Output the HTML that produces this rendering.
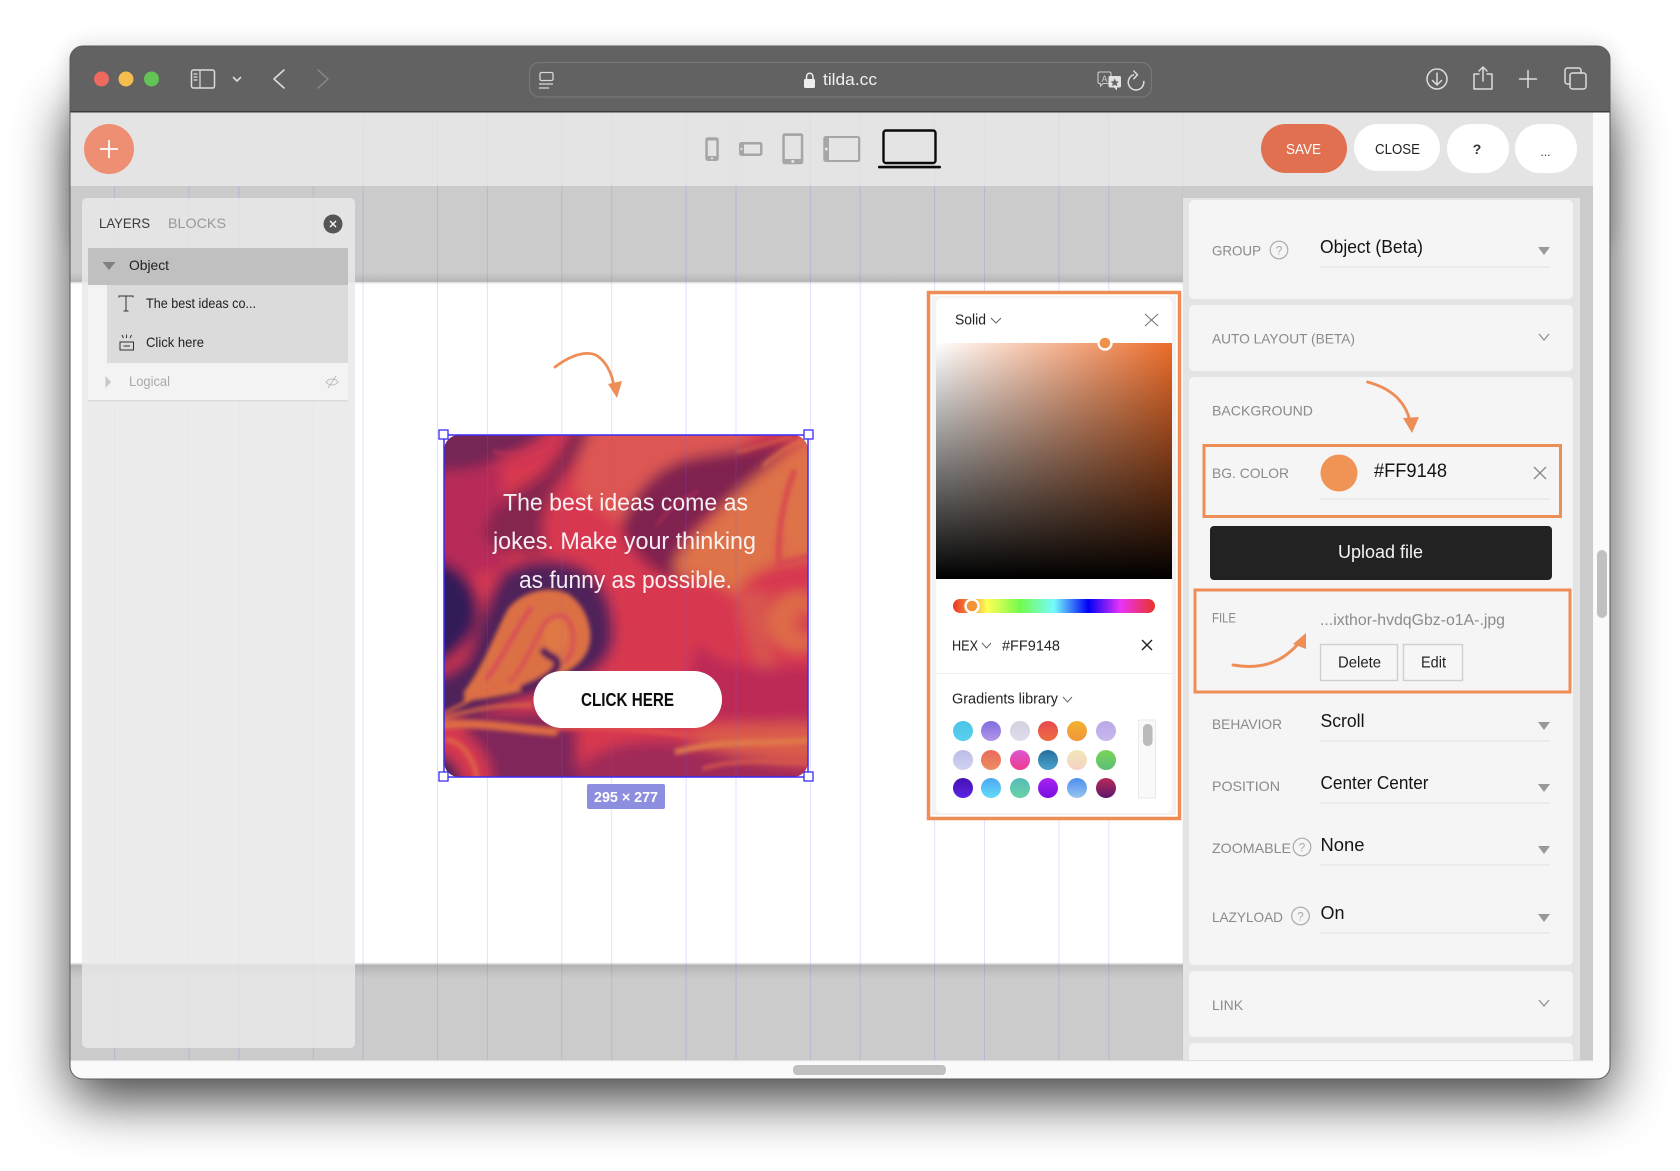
<!DOCTYPE html>
<html lang="en">
<head>
<meta charset="utf-8">
<title>Tilda</title>
<style>
html,body{margin:0;padding:0;background:#fff;width:1680px;height:1171px;overflow:hidden}
svg{display:block}
text{font-family:"Liberation Sans",sans-serif}
</style>
</head>
<body>
<svg xmlns="http://www.w3.org/2000/svg" width="1680" height="1171" viewBox="0 0 1680 1171">
<defs>
<clipPath id="win"><rect x="70" y="46" width="1540" height="1033" rx="13"/></clipPath>
<clipPath id="cardclip"><rect x="444" y="435" width="364" height="342" rx="15"/></clipPath>
<filter id="sh1" filterUnits="userSpaceOnUse" x="0" y="0" width="1680" height="1171"><feGaussianBlur stdDeviation="28"/></filter>
<filter id="sh2" filterUnits="userSpaceOnUse" x="0" y="0" width="1680" height="1171"><feGaussianBlur stdDeviation="11"/></filter>
<filter id="mb" filterUnits="userSpaceOnUse" x="-100" y="-100" width="1300" height="1240"><feGaussianBlur stdDeviation="20"/></filter>
<filter id="mb2" filterUnits="userSpaceOnUse" x="-100" y="-100" width="1300" height="1240"><feGaussianBlur stdDeviation="6"/></filter>
<linearGradient id="gTop" x1="0" y1="0" x2="0" y2="1"><stop offset="0" stop-color="#cbcbcb"/><stop offset="1" stop-color="#b4b4b4"/></linearGradient>
<linearGradient id="gBot" x1="0" y1="0" x2="0" y2="1"><stop offset="0" stop-color="#b2b2b2"/><stop offset="1" stop-color="#cbcbcb"/></linearGradient>
<linearGradient id="pickH" x1="0" y1="0" x2="1" y2="0"><stop offset="0" stop-color="#fff"/><stop offset="1" stop-color="#ec6c2a"/></linearGradient>
<linearGradient id="pickV" x1="0" y1="0" x2="0" y2="1"><stop offset="0" stop-color="#000" stop-opacity="0"/><stop offset="1" stop-color="#000"/></linearGradient>
<linearGradient id="hue" x1="0" y1="0" x2="1" y2="0">
<stop offset="0" stop-color="#ea3323"/><stop offset=".17" stop-color="#ffff55"/><stop offset=".33" stop-color="#75fb4c"/><stop offset=".5" stop-color="#75fbfd"/><stop offset=".67" stop-color="#0000f5"/><stop offset=".83" stop-color="#ea33f7"/><stop offset="1" stop-color="#ea3323"/></linearGradient>
<linearGradient id="c1" x1="0" y1="0" x2="0" y2="1"><stop offset="0" stop-color="#4cc4e6"/><stop offset="1" stop-color="#5ad0ee"/></linearGradient>
<linearGradient id="c2" x1="0" y1="0" x2="0" y2="1"><stop offset="0" stop-color="#7f6cdc"/><stop offset="1" stop-color="#b596ea"/></linearGradient>
<linearGradient id="c3" x1="0" y1="0" x2="0" y2="1"><stop offset="0" stop-color="#d3d0df"/><stop offset="1" stop-color="#dfdbec"/></linearGradient>
<linearGradient id="c4" x1="0" y1="0" x2="0" y2="1"><stop offset="0" stop-color="#e64a50"/><stop offset="1" stop-color="#ee6c42"/></linearGradient>
<linearGradient id="c5" x1="0" y1="0" x2="0" y2="1"><stop offset="0" stop-color="#f3b22e"/><stop offset="1" stop-color="#f0963c"/></linearGradient>
<linearGradient id="c6" x1="0" y1="0" x2="0" y2="1"><stop offset="0" stop-color="#b9a8e8"/><stop offset="1" stop-color="#c9b8ec"/></linearGradient>
<linearGradient id="c7" x1="0" y1="0" x2="0" y2="1"><stop offset="0" stop-color="#bcbde8"/><stop offset="1" stop-color="#d0d2ef"/></linearGradient>
<linearGradient id="c8" x1="0" y1="0" x2="0" y2="1"><stop offset="0" stop-color="#ea6a5c"/><stop offset="1" stop-color="#ec8e62"/></linearGradient>
<linearGradient id="c9" x1="0" y1="0" x2="0" y2="1"><stop offset="0" stop-color="#dc58d0"/><stop offset="1" stop-color="#ee3a8e"/></linearGradient>
<linearGradient id="c10" x1="0" y1="0" x2="0" y2="1"><stop offset="0" stop-color="#266f9f"/><stop offset="1" stop-color="#4ca4cc"/></linearGradient>
<linearGradient id="c11" x1="0" y1="0" x2="0" y2="1"><stop offset="0" stop-color="#f0e8b6"/><stop offset="1" stop-color="#f6d2c6"/></linearGradient>
<linearGradient id="c12" x1="0" y1="0" x2="0" y2="1"><stop offset="0" stop-color="#7cd455"/><stop offset="1" stop-color="#5cc078"/></linearGradient>
<linearGradient id="c13" x1="0" y1="0" x2="0" y2="1"><stop offset="0" stop-color="#4610b4"/><stop offset="1" stop-color="#5a24e4"/></linearGradient>
<linearGradient id="c14" x1="0" y1="0" x2="0" y2="1"><stop offset="0" stop-color="#4ea8f2"/><stop offset="1" stop-color="#62dcf8"/></linearGradient>
<linearGradient id="c15" x1="0" y1="0" x2="0" y2="1"><stop offset="0" stop-color="#54bcb8"/><stop offset="1" stop-color="#6cd4a6"/></linearGradient>
<linearGradient id="c16" x1="0" y1="0" x2="0" y2="1"><stop offset="0" stop-color="#a824f2"/><stop offset="1" stop-color="#7a0ee0"/></linearGradient>
<linearGradient id="c17" x1="0" y1="0" x2="0" y2="1"><stop offset="0" stop-color="#4f8ef0"/><stop offset="1" stop-color="#98c6ee"/></linearGradient>
<linearGradient id="c18" x1="0" y1="0" x2="0" y2="1"><stop offset="0" stop-color="#b82a56"/><stop offset="1" stop-color="#5c186c"/></linearGradient>
</defs>

<!-- window shadow -->
<rect x="70" y="105" width="1540" height="995" rx="16" fill="#000" opacity=".75" filter="url(#sh1)"/>
<rect x="70" y="46" width="1540" height="200" rx="13" fill="#000" opacity=".16" filter="url(#sh2)"/>

<g clip-path="url(#win)">
<rect x="70" y="46" width="1540" height="1033" fill="#fafafa"/>
<rect x="70" y="46" width="1540" height="67" fill="#626262"/>
<rect x="70" y="111" width="1540" height="1.500" fill="#3a3a3a"/>
<rect x="70" y="112.500" width="1523" height="73.500" fill="#e4e4e4"/>
<rect x="70" y="186" width="1523" height="875" fill="#cbcbcb"/>
<rect x="70" y="272" width="1113" height="11" fill="url(#gTop)"/>
<rect x="70" y="283" width="1113" height="681" fill="#fff"/>
<rect x="70" y="282" width="1113" height="1.500" fill="#e2e2e2"/>
<rect x="70" y="964" width="1113" height="14" fill="url(#gBot)"/>
<rect x="70" y="963" width="1113" height="1.500" fill="#e2e2e2"/>
</g>

<!-- marble card -->
<g clip-path="url(#cardclip)">
<g transform="translate(444 435) scale(.33333)">
<g filter="url(#mb)">
<rect x="-100" y="-100" width="1300" height="1240" fill="#d8374f"/>
<path d="M-100 80H170L190 400L100 420H-100Z" fill="#b82c58"/>
<path d="M-100 -100H340C320 40 230 40 150 80C90 110 40 100 -100 120Z" fill="#742855"/>
<path d="M420 -100H1040L880 50C720 80 600 150 540 280C500 240 420 190 390 170C400 100 410 50 420 -100Z" fill="#dd5752"/>
<path d="M390 -100C370 60 300 120 220 165C150 210 115 260 125 310C160 355 230 360 310 345C280 280 310 200 340 150C390 90 430 40 460 -100Z" fill="#85254f"/>
<path d="M-100 360C40 370 100 440 105 510C110 590 60 670 -100 730Z" fill="#321a58"/>
<path d="M80 650C110 560 140 470 170 420C240 360 350 365 420 400C490 440 515 540 510 615C495 690 440 725 380 745L200 800L50 850L-100 860L-100 740C30 720 60 690 80 650Z" fill="#50205a"/>
<path d="M530 280C560 180 630 100 730 70C820 50 950 45 1050 0C1000 80 910 140 840 205C780 255 720 320 695 370C690 395 700 420 705 435C640 430 560 360 530 280Z" fill="#80224f"/>
<path d="M690 385C720 330 780 280 830 225C890 160 960 100 1200 -60V120C1040 140 1000 300 1005 385C960 400 900 420 880 480C830 440 760 420 700 420Z" fill="#de7248"/>
<path d="M1040 130L1200 100V350L1010 385C1020 300 1020 200 1040 130Z" fill="#de7248"/>
<ellipse cx="1065" cy="560" rx="95" ry="90" fill="#de6c48"/>
<ellipse cx="1090" cy="565" rx="42" ry="38" fill="#d8454e"/>
<path d="M880 470C880 550 920 620 940 700L1000 700C960 620 970 520 980 470Z" fill="#d85550"/>
<path d="M760 620C800 680 900 720 1200 680V860C950 870 800 860 700 840Z" fill="#bd2c56"/>
<path d="M340 1140C380 950 500 910 700 920C850 960 1000 1000 1200 1000V1140Z" fill="#a02a58"/>
<path d="M720 900C820 860 960 870 1200 860V980C950 990 820 950 720 900Z" fill="#da5c4c"/>
<path d="M50 840L290 830L400 880L400 1140L150 1140C150 980 120 940 70 905Z" fill="#80265a"/>
<path d="M-100 930C30 950 60 990 70 1140H-100Z" fill="#38205a"/>
</g>
<g filter="url(#mb2)" fill="none" stroke-linecap="round">
<path d="M60 770C120 690 150 600 190 525C230 470 310 450 370 475C420 505 445 570 438 620C432 665 400 695 360 715C300 760 200 780 60 800Z" fill="#dc7045"/>
<path d="M130 730C180 660 210 590 260 520" stroke="#d8455a" stroke-width="12"/>
<path d="M200 740C240 690 260 640 290 590C300 555 340 530 370 550C395 590 395 640 365 680" stroke="#d8455a" stroke-width="10"/>
<ellipse cx="335" cy="600" rx="36" ry="48" fill="#e07845"/>
<path d="M300 650C320 670 340 665 340 690C330 720 290 740 240 760" stroke="#5a2258" stroke-width="24"/>
<path d="M0 835C70 800 130 770 210 720" stroke="#dc6a45" stroke-width="9"/>
<path d="M0 850C90 820 170 810 260 810" stroke="#dc6a45" stroke-width="10"/>
<path d="M0 870C100 860 200 880 330 890" stroke="#dd6b45" stroke-width="26"/>
<path d="M10 915C50 920 85 960 100 1030" stroke="#dd6b45" stroke-width="12"/>
<path d="M700 950C850 910 980 930 1100 915" stroke="#e07a48" stroke-width="18"/>
<path d="M780 1000C880 970 1000 980 1100 985" stroke="#d95a4c" stroke-width="11"/>
<path d="M340 880C500 870 640 890 730 900" stroke="#e0504c" stroke-width="14"/>
<path d="M150 50C230 80 300 20 370 10" stroke="#c43058" stroke-width="8"/>
<path d="M130 100C220 100 290 70 350 30" stroke="#c43058" stroke-width="6"/>
<path d="M170 220C220 170 270 150 320 110" stroke="#a82a55" stroke-width="6"/>
<path d="M640 270C680 210 720 190 760 170" stroke="#b83055" stroke-width="6"/>
<path d="M880 50C930 40 990 20 1040 5" stroke="#df6a45" stroke-width="7"/>
<path d="M960 90C1000 55 1040 30 1080 15" stroke="#e07548" stroke-width="9"/>
<path d="M1050 110C1015 200 1000 300 1005 390L1100 362" stroke="#d84a50" stroke-width="16"/>
</g>
</g>
</g>

<g clip-path="url(#win)">
<path d="M114.600 186V1061M238.900 186V1061M363.100 186V1061M487.400 186V1061M611.700 186V1061M736 186V1061M860.200 186V1061M984.500 186V1061M1108.800 186V1061M189 186V1061M313.300 186V1061M437.500 186V1061M561.800 186V1061M686.100 186V1061M810.400 186V1061M934.600 186V1061M1058.900 186V1061M1183.200 186V1061" stroke="#6a6aff" stroke-width="1" opacity=".2" fill="none"/>
<path d="M363.100 113V186M487.400 113V186M611.700 113V186M736 113V186M860.200 113V186M984.500 113V186M1108.800 113V186M437.500 113V186M561.800 113V186M686.100 113V186M810.400 113V186M934.600 113V186M1058.900 113V186M1183.200 113V186" stroke="#6a6aff" stroke-width="1" opacity=".04" fill="none"/>
</g>

<!-- card selection -->
<rect x="444" y="435" width="364" height="342" fill="none" stroke="#3b2cf5" stroke-width="1.500"/>
<g fill="#fff" stroke="#3b2cf5" stroke-width="1.300">
<rect x="439" y="430" width="9" height="9"/><rect x="804" y="430" width="9" height="9"/>
<rect x="439" y="772" width="9" height="9"/><rect x="804" y="772" width="9" height="9"/>
</g>
<g fill="#fff" font-size="24.500" opacity=".92">
<text x="503" y="510.500" textLength="245" lengthAdjust="spacingAndGlyphs">The best ideas come as</text>
<text x="493" y="549" textLength="263" lengthAdjust="spacingAndGlyphs">jokes. Make your thinking</text>
<text x="519" y="588" textLength="213" lengthAdjust="spacingAndGlyphs">as funny as possible.</text>
</g>
<rect x="533.500" y="671" width="188.500" height="57" rx="28.500" fill="#fff"/>
<text x="581" y="706" font-size="18" font-weight="700" fill="#0c0c0c" textLength="93" lengthAdjust="spacingAndGlyphs">CLICK HERE</text>
<rect x="587" y="784" width="78" height="25" rx="2" fill="#8e8ee0"/>
<text x="594" y="802" font-size="15" font-weight="700" fill="#fff" textLength="64" lengthAdjust="spacingAndGlyphs">295 × 277</text>

<!-- arrow 1 -->
<path d="M555 367C575 352 592 350 600 358C608 365 612 375 614 386" fill="none" stroke="#ef8d57" stroke-width="2.800" stroke-linecap="round"/>
<path d="M608 384L622 381L617 398Z" fill="#ef8d57"/>

<!-- left panel -->
<rect x="82" y="198" width="273" height="850" rx="5" fill="#e8e8e8" fill-opacity=".84"/>
<text x="99" y="228" font-size="14" fill="#3a3a3a" textLength="51" lengthAdjust="spacingAndGlyphs">LAYERS</text>
<text x="168" y="228" font-size="14" fill="#999" textLength="58" lengthAdjust="spacingAndGlyphs">BLOCKS</text>
<circle cx="333" cy="224" r="9.500" fill="#555"/>
<path d="M330 221L336 227M336 221L330 227" stroke="#fff" stroke-width="1.300"/>
<rect x="88" y="248" width="260" height="37" fill="#c0c0c0"/>
<rect x="88" y="285" width="260" height="78" fill="#f3f3f3"/>
<rect x="107" y="285" width="241" height="78" fill="#dbdbdb"/>
<rect x="88" y="363" width="260" height="38" fill="#f3f3f3"/>
<rect x="88" y="400" width="260" height="1.500" fill="#dcdcdc"/>
<path d="M102.500 262H115.500L109 270Z" fill="#808080"/>
<text x="129" y="270" font-size="14" fill="#222" textLength="40" lengthAdjust="spacingAndGlyphs">Object</text>
<path d="M119 297.500V296H133V297.500M126 296V311M123.500 311H128.500" fill="none" stroke="#333" stroke-width="1"/>
<text x="146" y="308" font-size="14" fill="#222" textLength="110" lengthAdjust="spacingAndGlyphs">The best ideas co...</text>
<path d="M120 342H133.500V350H120ZM123.500 346H130M122 335L123.500 338M126.500 334.500V338M131.500 335L130 338" fill="none" stroke="#333" stroke-width="1"/>
<text x="146" y="347" font-size="14" fill="#222" textLength="58" lengthAdjust="spacingAndGlyphs">Click here</text>
<path d="M105.500 376V388L111 382Z" fill="#c8c8c8"/>
<text x="129" y="386" font-size="14" fill="#aaa" textLength="41" lengthAdjust="spacingAndGlyphs">Logical</text>
<path d="M326 382C329 378 335 378 338 382C335 386 329 386 326 382ZM328 388L336 376" fill="none" stroke="#bbb" stroke-width="1"/>

<!-- right panel -->
<g clip-path="url(#win)">
<rect x="1183" y="186" width="397" height="875" fill="#cbcbcb"/>
<rect x="1183" y="198" width="397" height="863" fill="#e4e4e4"/>
<rect x="1580" y="186" width="13" height="875" fill="#cbcbcb"/>
<rect x="1189" y="200" width="384" height="99" rx="5" fill="#f5f5f5"/>
<rect x="1189" y="305" width="384" height="66" rx="5" fill="#f5f5f5"/>
<rect x="1189" y="377" width="384" height="588" rx="5" fill="#f5f5f5"/>
<rect x="1189" y="971" width="384" height="66" rx="5" fill="#f5f5f5"/>
<rect x="1189" y="1043" width="384" height="30" rx="5" fill="#f5f5f5"/>
<rect x="70" y="1061" width="1540" height="18" fill="#fafafa"/>
<rect x="70" y="1060" width="1523" height="1.200" fill="#e0e0e0"/>
<rect x="793" y="1065" width="153" height="10" rx="4" fill="#c0c0c0"/>
<rect x="1593" y="112.500" width="17" height="950" fill="#fafafa"/>
<rect x="1597" y="550" width="10" height="68" rx="5" fill="#c0c0c0"/>
</g>

<g font-size="14" fill="#8a8a8a">
<text x="1212" y="255.500" textLength="49" lengthAdjust="spacingAndGlyphs">GROUP</text>
<text x="1212" y="343.500" textLength="143" lengthAdjust="spacingAndGlyphs">AUTO LAYOUT (BETA)</text>
<text x="1212" y="415.500" textLength="101" lengthAdjust="spacingAndGlyphs">BACKGROUND</text>
<text x="1212" y="478" textLength="77" lengthAdjust="spacingAndGlyphs">BG. COLOR</text>
<text x="1212" y="622.500" textLength="24" lengthAdjust="spacingAndGlyphs">FILE</text>
<text x="1212" y="729" textLength="70" lengthAdjust="spacingAndGlyphs">BEHAVIOR</text>
<text x="1212" y="791" textLength="68" lengthAdjust="spacingAndGlyphs">POSITION</text>
<text x="1212" y="853" textLength="79" lengthAdjust="spacingAndGlyphs">ZOOMABLE</text>
<text x="1212" y="922" textLength="71" lengthAdjust="spacingAndGlyphs">LAZYLOAD</text>
<text x="1212" y="1010" textLength="31" lengthAdjust="spacingAndGlyphs">LINK</text>
</g>
<g fill="none" stroke="#aaa" stroke-width="1.200">
<circle cx="1279" cy="250" r="8.800"/><circle cx="1302" cy="847" r="8.800"/><circle cx="1300.500" cy="916" r="8.800"/>
</g>
<g font-size="12" fill="#aaa" text-anchor="middle">
<text x="1279" y="254.500">?</text><text x="1302" y="851.500">?</text><text x="1300.500" y="920.500">?</text>
</g>
<g font-size="18" fill="#141414">
<text x="1320" y="253" textLength="103" lengthAdjust="spacingAndGlyphs">Object (Beta)</text>
<text x="1320.500" y="727" textLength="44" lengthAdjust="spacingAndGlyphs">Scroll</text>
<text x="1320.500" y="789" textLength="108" lengthAdjust="spacingAndGlyphs">Center Center</text>
<text x="1320.500" y="851" textLength="44" lengthAdjust="spacingAndGlyphs">None</text>
<text x="1320.500" y="919" textLength="24" lengthAdjust="spacingAndGlyphs">On</text>
</g>
<path d="M1320 267H1550M1320 499H1550M1320 741H1550M1320 803H1550M1320 865H1550M1320 933H1550" stroke="#e5e5e5" stroke-width="1.200" fill="none"/>
<g fill="#999">
<path d="M1538 247H1550L1544 255Z"/><path d="M1538 722H1550L1544 730Z"/><path d="M1538 784H1550L1544 792Z"/><path d="M1538 846H1550L1544 854Z"/><path d="M1538 914H1550L1544 922Z"/>
</g>
<path d="M1539 334L1544 340L1549 334M1539 1000L1544 1006L1549 1000" fill="none" stroke="#888" stroke-width="1.200"/>

<circle cx="1339" cy="473" r="18.500" fill="#f09455"/>
<text x="1374" y="477" font-size="19" fill="#141414" textLength="73" lengthAdjust="spacingAndGlyphs">#FF9148</text>
<path d="M1534 467L1546 479M1546 467L1534 479" stroke="#888" stroke-width="1.300"/>
<rect x="1204" y="445.500" width="356.500" height="71" fill="none" stroke="#ef8d57" stroke-width="3"/>
<rect x="1210" y="526" width="342" height="54" rx="4" fill="#222"/>
<text x="1338" y="558" font-size="18" fill="#f4f4f4" textLength="85" lengthAdjust="spacingAndGlyphs">Upload file</text>
<rect x="1195" y="590" width="375" height="102" fill="none" stroke="#ef8d57" stroke-width="3"/>
<text x="1320" y="625" font-size="16" fill="#8c8c8c" textLength="185" lengthAdjust="spacingAndGlyphs">...ixthor-hvdqGbz-o1A-.jpg</text>
<rect x="1320.500" y="644.500" width="77" height="36" fill="#f6f6f6" stroke="#cfcfcf" stroke-width="1.400"/>
<rect x="1403.500" y="644.500" width="59" height="36" fill="#f6f6f6" stroke="#cfcfcf" stroke-width="1.400"/>
<text x="1338" y="667.500" font-size="16" fill="#222" textLength="43" lengthAdjust="spacingAndGlyphs">Delete</text>
<text x="1421" y="667.500" font-size="16" fill="#222" textLength="25" lengthAdjust="spacingAndGlyphs">Edit</text>

<!-- arrows 2, 3 -->
<path d="M1367.500 382C1390 388 1405 400 1410 421" fill="none" stroke="#ef8d57" stroke-width="2.800" stroke-linecap="round"/>
<path d="M1403 418L1419 417L1412 433Z" fill="#ef8d57"/>
<path d="M1233 665C1262 670 1282 662 1298 644" fill="none" stroke="#ef8d57" stroke-width="3" stroke-linecap="round"/>
<path d="M1293 644L1306 633L1306 649Z" fill="#ef8d57"/>

<!-- color picker -->
<rect x="928.500" y="292.500" width="251" height="526" fill="#fff" stroke="#ef8d57" stroke-width="3.500"/>
<rect x="932" y="296" width="244" height="519" fill="#f3f3f3"/>
<rect x="936" y="298" width="236" height="515" rx="6" fill="#fff"/>
<rect x="936" y="343" width="236" height="236" fill="url(#pickH)"/>
<rect x="936" y="343" width="236" height="236" fill="url(#pickV)"/>
<circle cx="1105" cy="343" r="6.500" fill="#f09148" stroke="#fff" stroke-width="2.400"/>
<text x="955" y="324.500" font-size="15" fill="#222" textLength="31" lengthAdjust="spacingAndGlyphs">Solid</text>
<path d="M991 318L996 323L1001 318" fill="none" stroke="#666" stroke-width="1"/>
<path d="M1145 314L1158 326M1158 314L1145 326" stroke="#777" stroke-width="1.100"/>
<rect x="953" y="599" width="202" height="14" rx="7" fill="url(#hue)"/>
<circle cx="972" cy="606" r="6.500" fill="#f09436" stroke="#fff" stroke-width="2.400"/>
<text x="952" y="650.500" font-size="15" fill="#222" textLength="26" lengthAdjust="spacingAndGlyphs">HEX</text>
<path d="M982 643L986.500 648L991 643" fill="none" stroke="#666" stroke-width="1"/>
<text x="1002" y="650.500" font-size="15" fill="#222" textLength="58" lengthAdjust="spacingAndGlyphs">#FF9148</text>
<path d="M1142 640L1152 650M1152 640L1142 650" stroke="#222" stroke-width="1.400"/>
<rect x="936" y="673" width="236" height="1" fill="#eee"/>
<text x="952" y="703.500" font-size="15" fill="#222" textLength="106" lengthAdjust="spacingAndGlyphs">Gradients library</text>
<path d="M1063 697L1067.500 702L1072 697" fill="none" stroke="#666" stroke-width="1"/>
<circle cx="963" cy="731" r="10" fill="url(#c1)"/><circle cx="991" cy="731" r="10" fill="url(#c2)"/><circle cx="1020" cy="731" r="10" fill="url(#c3)"/><circle cx="1048" cy="731" r="10" fill="url(#c4)"/><circle cx="1077" cy="731" r="10" fill="url(#c5)"/><circle cx="1106" cy="731" r="10" fill="url(#c6)"/>
<circle cx="963" cy="760" r="10" fill="url(#c7)"/><circle cx="991" cy="760" r="10" fill="url(#c8)"/><circle cx="1020" cy="760" r="10" fill="url(#c9)"/><circle cx="1048" cy="760" r="10" fill="url(#c10)"/><circle cx="1077" cy="760" r="10" fill="url(#c11)"/><circle cx="1106" cy="760" r="10" fill="url(#c12)"/>
<circle cx="963" cy="788" r="10" fill="url(#c13)"/><circle cx="991" cy="788" r="10" fill="url(#c14)"/><circle cx="1020" cy="788" r="10" fill="url(#c15)"/><circle cx="1048" cy="788" r="10" fill="url(#c16)"/><circle cx="1077" cy="788" r="10" fill="url(#c17)"/><circle cx="1106" cy="788" r="10" fill="url(#c18)"/>
<rect x="1138.500" y="720" width="17" height="78" fill="#f9f9f9" stroke="#eaeaea" stroke-width="1"/>
<rect x="1143" y="724" width="9.500" height="22" rx="4.500" fill="#bbb"/>

<!-- window edge -->
<rect x="70" y="46" width="1540" height="1033" rx="13" fill="none" stroke="#5a5a5a" stroke-width="1"/>

<!-- title bar controls -->
<circle cx="101.500" cy="79" r="7.500" fill="#ee6a5f"/>
<circle cx="126" cy="79" r="7.500" fill="#f5bd4f"/>
<circle cx="151.500" cy="79" r="7.500" fill="#61c454"/>
<g fill="none" stroke="#dcdcdc" stroke-width="1.500" stroke-linecap="round" stroke-linejoin="round">
<rect x="191.500" y="70" width="23" height="18" rx="2"/>
<path d="M200 70V88M194 74H197M194 77H197M194 80H197" stroke-width="1.200"/>
<path d="M233.500 77.500L237 81L240.500 77.500" stroke-width="1.600"/>
<path d="M284 70L274 79L284 88" stroke-width="1.600"/>
<path d="M318 70L328 79L318 88" stroke="#888"/>
<circle cx="1437" cy="79" r="10"/>
<path d="M1437 73V85M1432.500 80.500L1437 85L1441.500 80.500"/>
<path d="M1479 74H1474V89H1492V74H1487M1483 81V67M1479 71L1483 67L1487 71"/>
<path d="M1528 70.500V87.500M1519.500 79H1536.500"/>
<rect x="1570" y="73" width="16" height="16" rx="2.500"/>
<path d="M1570 84H1567.500C1566 84 1565 83 1565 81.500V70.500C1565 69 1566 68 1567.500 68H1578.500C1580 68 1581 69 1581 70.500V73"/>
<path d="M1133.500 74.800A7.800 7.800 0 1 0 1143.800 81.500"/>
<path d="M1133.800 71L1137.500 74.800L1133.800 78.800"/>
</g>
<rect x="529.500" y="62.500" width="622" height="34.500" rx="10" fill="none" stroke="#777" stroke-width="1.200"/>
<g fill="none" stroke="#d8d8d8" stroke-width="1.300">
<rect x="540" y="72.500" width="13" height="8" rx="1.500"/>
<path d="M539 84H553M539 88H549"/>
</g>
<path d="M806.500 80V77C806.500 72 813 72 813 77V80" fill="none" stroke="#eee" stroke-width="1.500"/>
<rect x="804" y="79" width="11" height="9" rx="1.500" fill="#eee"/>
<text x="823" y="85" font-size="17" fill="#f0f0f0" textLength="54" lengthAdjust="spacingAndGlyphs">tilda.cc</text>
<path d="M1099.500 72H1109.500C1110.500 72 1111 72.500 1111 73.500V82C1111 83 1110.500 83.500 1109.500 83.500H1103L1100.500 86V83.500H1099.500C1098.500 83.500 1098 83 1098 82V73.500C1098 72.500 1098.500 72 1099.500 72Z" fill="none" stroke="#ccc" stroke-width="1.100"/>
<text x="1104.500" y="82" font-size="9" fill="#ccc" text-anchor="middle">A</text>
<path d="M1110 76H1119.500C1120.500 76 1121 76.500 1121 77.500V86C1121 87 1120.500 87.500 1119.500 87.500H1117V90.500L1114 87.500H1110C1109 87.500 1108.500 87 1108.500 86V77.500C1108.500 76.500 1109 76 1110 76Z" fill="#e2e2e2"/>
<path d="M1114.700 78.500L1116 81.200L1118.800 81.500L1116.800 83.400L1117.300 86.200L1114.700 84.800L1112.200 86.200L1112.700 83.400L1110.700 81.500L1113.500 81.200Z" fill="#666"/>

<!-- toolbar controls -->
<ellipse cx="109" cy="149" rx="25" ry="25" fill="#ee8f73"/>
<path d="M109 140V158M100 149H118" stroke="#fff" stroke-width="1.800"/>
<rect x="705.300" y="137.300" width="13.500" height="23.700" rx="2.500" fill="#a6a6a6"/>
<rect x="707.800" y="140.500" width="8.500" height="15.500" fill="#e4e4e4"/>
<circle cx="712" cy="158.300" r="1.100" fill="#e4e4e4"/>
<rect x="739" y="142" width="23.500" height="14" rx="2.500" fill="#a6a6a6"/>
<rect x="744" y="144.500" width="16" height="9" fill="#e4e4e4"/>
<circle cx="741.400" cy="149" r="1.100" fill="#e4e4e4"/>
<rect x="782.300" y="133.300" width="21" height="31" rx="2.500" fill="#a6a6a6"/>
<rect x="784.800" y="136" width="16" height="23" fill="#e4e4e4"/>
<circle cx="792.800" cy="161.500" r="1.500" fill="#e4e4e4"/>
<rect x="823.300" y="136" width="37" height="26" rx="2.500" fill="#a6a6a6"/>
<rect x="829" y="138" width="29" height="22" fill="#e4e4e4"/>
<circle cx="826.300" cy="149" r="1.500" fill="#e4e4e4"/>
<rect x="883.500" y="130.500" width="52" height="32.500" rx="2.500" fill="none" stroke="#0a0a0a" stroke-width="2.400"/>
<rect x="878" y="165.800" width="63" height="2.600" rx="1.300" fill="#0a0a0a"/>

<rect x="1261" y="124" width="86" height="49" rx="24.500" fill="#e07050"/>
<rect x="1354" y="124" width="86" height="47" rx="23.500" fill="#fff"/>
<rect x="1447" y="124" width="62" height="49" rx="24.500" fill="#fff"/>
<rect x="1515" y="124" width="62" height="49" rx="24.500" fill="#fff"/>
<text x="1286" y="154" font-size="15" fill="#fff" textLength="35" lengthAdjust="spacingAndGlyphs">SAVE</text>
<text x="1375" y="154" font-size="15" fill="#222" textLength="45" lengthAdjust="spacingAndGlyphs">CLOSE</text>
<text x="1477" y="154" font-size="14" font-weight="700" fill="#333" text-anchor="middle">?</text>
<text x="1545.500" y="156" font-size="12" fill="#333" text-anchor="middle">...</text>
</svg>
</body>
</html>
